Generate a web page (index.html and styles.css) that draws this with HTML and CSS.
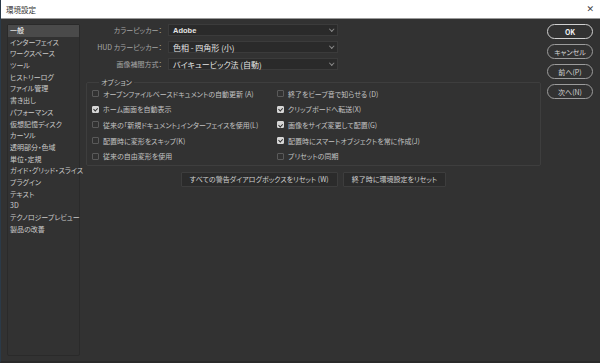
FILE: index.html
```html
<!DOCTYPE html>
<html lang="ja">
<head>
  <meta charset="UTF-8">
  <meta name="viewport" content="width=device-width, initial-scale=1.0">
  <title>環境設定</title>
  <link rel="stylesheet" href="styles.css">
</head>
<body>
  <div class="titlebar">
    <div class="title">環境設定</div>
    <div class="close">✕</div>
  </div>
  <div class="window">
    <ul class="sidebar">
      <li class="active">一般</li>
      <li>インターフェイス</li>
      <li>ワークスペース</li>
      <li>ツール</li>
      <li>ヒストリーログ</li>
      <li>ファイル管理</li>
      <li>書き出し</li>
      <li>パフォーマンス</li>
      <li>仮想記憶ディスク</li>
      <li>カーソル</li>
      <li>透明部分・色域</li>
      <li>単位・定規</li>
      <li>ガイド・グリッド・スライス</li>
      <li>プラグイン</li>
      <li>テキスト</li>
      <li>3D</li>
      <li>テクノロジープレビュー</li>
      <li>製品の改善</li>
    </ul>

    <div class="main">
      <div class="field">
        <div class="label">カラーピッカー：</div>
        <div class="select"><span class="value latin">Adobe</span><i class="chev"></i></div>
      </div>
      <div class="field">
        <div class="label">HUD カラーピッカー：</div>
        <div class="select"><span class="value">色相 - 四角形 (小)</span><i class="chev"></i></div>
      </div>
      <div class="field">
        <div class="label">画像補間方式：</div>
        <div class="select"><span class="value">バイキュービック法 (自動)</span><i class="chev"></i></div>
      </div>

      <fieldset class="options">
        <legend>オプション</legend>
        <div class="checks">
          <label class="check"><i class="box"></i>オープンファイルベースドキュメントの自動更新 (A)</label>
          <label class="check"><i class="box"></i>終了をビープ音で知らせる (D)</label>
          <label class="check"><i class="box on"></i>ホーム画面を自動表示</label>
          <label class="check"><i class="box on"></i>クリップボードへ転送(X)</label>
          <label class="check"><i class="box"></i>従来の「新規ドキュメント」インターフェイスを使用(L)</label>
          <label class="check"><i class="box on"></i>画像をサイズ変更して配置(G)</label>
          <label class="check"><i class="box"></i>配置時に変形をスキップ(K)</label>
          <label class="check"><i class="box on"></i>配置時にスマートオブジェクトを常に作成(J)</label>
          <label class="check"><i class="box"></i>従来の自由変形を使用</label>
          <label class="check"><i class="box"></i>プリセットの同期</label>
        </div>
      </fieldset>

      <div class="resets">
        <button class="reset">すべての警告ダイアログボックスをリセット (W)</button>
        <button class="reset">終了時に環境設定をリセット</button>
      </div>
    </div>

    <div class="actions">
      <button class="pill default">OK</button>
      <button class="pill">キャンセル</button>
      <button class="pill">前へ(P)</button>
      <button class="pill">次へ(N)</button>
    </div>
  </div>
</body>
</html>
```

FILE: styles.css
```css
* {
  box-sizing: border-box;
}
html,
body {
  margin: 0;
  height: 100%;
}
body {
  display: flex;
  flex-direction: column;
  background-color: #323232;
  color: #c2c2c2;
  font-family: "Noto Sans CJK JP", "Noto Sans", sans-serif;
  font-size: 7px;
  font-feature-settings: "palt";
  border-left: 1px solid #2b3a48;
  border-bottom: 2px solid #2a2a2a;
}

/* タイトルバー */
.titlebar {
  display: flex;
  align-items: center;
  justify-content: space-between;
  height: 19px;
  padding: 0 6px 0 5px;
  background-color: #fff;
  border-bottom: 1px solid #9a9a9a;
  color: #333;
}
.title {
  font-size: 7.5px;
}
.close {
  font-family: "DejaVu Sans", sans-serif;
  font-size: 9px;
  color: #444;
}

.window {
  flex: 1;
  display: flex;
  gap: 6px;
  padding: 5px 7px 5px 6px;
}

/* サイドバー */
.sidebar {
  width: 73px;
  margin: 0;
  padding: 0;
  list-style: none;
  border: 1px solid #2a2a2a;
  border-radius: 2px;
}
.sidebar li {
  height: 11.7px;
  line-height: 11.7px;
  padding-left: 2px;
  white-space: nowrap;
  color: #cacaca;
}
.sidebar li.active {
  background-color: #4a4a4a;
  color: #fff;
}

/* メイン */
.main {
  flex: 1;
  display: flex;
  flex-direction: column;
}
.field {
  display: flex;
  align-items: center;
  gap: 6px;
  height: 12px;
  margin-bottom: 5px;
}
.label {
  width: 76px;
  text-align: right;
  color: #a6a6a6;
  white-space: nowrap;
}
.select {
  display: flex;
  align-items: center;
  justify-content: space-between;
  width: 170px;
  height: 12px;
  padding: 0 4px 0 4px;
  background-color: #2a2a2a;
  border: 1px solid #3b3b3b;
  color: #e4e4e4;
  font-size: 8px;
}
.value.latin {
  font-family: "Liberation Sans", sans-serif;
  font-weight: bold;
  font-size: 7.5px;
}
.chev {
  width: 3.5px;
  height: 3.5px;
  margin-top: -2px;
  border-right: 1px solid #8a8a8a;
  border-bottom: 1px solid #8a8a8a;
  transform: rotate(45deg);
}

.options {
  margin: 3px 0 0 0;
  padding: 0 4px 1px 5px;
  border: 1px solid #3e3e3e;
  border-radius: 2px;
}
.options legend {
  padding: 0 2px;
  margin-left: 7px;
  color: #c2c2c2;
  line-height: 8px;
}
.checks {
  display: grid;
  grid-template-columns: 185px 1fr;
  grid-auto-rows: 15.6px;
}
.check {
  display: flex;
  align-items: center;
  gap: 4px;
  white-space: nowrap;
}
.box {
  flex: none;
  width: 7px;
  height: 7px;
  border: 1px solid #5a5a5a;
  border-radius: 1px;
  position: relative;
}
.box.on {
  background-color: #d6d6d6;
  border-color: #d6d6d6;
}
.box.on::after {
  content: "";
  position: absolute;
  left: 1.4px;
  top: 0.1px;
  width: 1.8px;
  height: 3.4px;
  border-right: 1px solid #2a2a2a;
  border-bottom: 1px solid #2a2a2a;
  transform: rotate(45deg);
}

.resets {
  display: flex;
  justify-content: center;
  gap: 5px;
  margin-top: 6px;
}
button {
  margin: 0;
  font-family: inherit;
  font-feature-settings: "palt";
  font-size: 7px;
  cursor: pointer;
}
.reset {
  height: 15px;
  padding: 0 8px;
  background-color: #2b2b2b;
  border: 1px solid #3d3d3d;
  border-radius: 1px;
  color: #d0d0d0;
}

/* 右側ボタン */
.actions {
  width: 46px;
  display: flex;
  flex-direction: column;
  gap: 5px;
}
.pill {
  height: 15px;
  padding: 0;
  background-color: #323232;
  border: 1px solid #9c9c9c;
  border-radius: 8px;
  color: #d6d6d6;
}
.pill.default {
  border: 1.5px solid #d0d0d0;
  color: #f0f0f0;
  font-weight: bold;
}
```
